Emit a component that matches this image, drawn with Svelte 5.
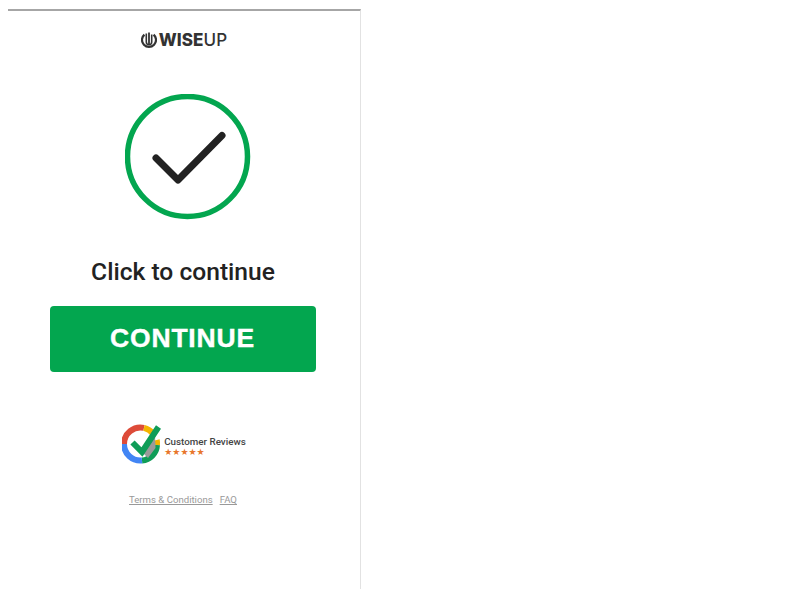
<script>
  const stars = [0, 1, 2, 3, 4]
</script>

<div class="page">
  <div class="panel">
    <div class="logo">
      <svg width="16" height="17" viewBox="0 0 16 17">
        <path d="M3.400 2.600 A7 7 0 1 0 12.600 2.600" fill="none" stroke="#333" stroke-width="2.200" />
        <path d="M5.300 1.500 V10 A2.700 2.700 0 0 0 10.700 10 V2.500" fill="none" stroke="#333" stroke-width="1.600" />
        <path d="M8 0.500 V12" stroke="#333" stroke-width="1.800" />
      </svg>
      <span class="brand"><b>WISE</b><span>UP</span></span>
    </div>

    <svg class="tick" width="126" height="126" viewBox="0 0 126 126">
      <circle cx="62.500" cy="62.500" r="60" fill="#fff" stroke="#03a64f" stroke-width="5.500" />
      <path d="M31 64 L53 86 L97 41.500" fill="none" stroke="#222" stroke-width="7" stroke-linecap="round" stroke-linejoin="round" />
    </svg>

    <h1>Click to continue</h1>
    <button class="continue">CONTINUE</button>

    <div class="reviews">
      <svg width="40" height="40" viewBox="0 0 40 40">
        <path d="M2 20 A16.500 16.500 0 0 1 22 3.900" fill="none" stroke="#dd4b39" stroke-width="6" />
        <path d="M22 3.900 A16.500 16.500 0 0 1 31 9.500" fill="none" stroke="#f4b400" stroke-width="6" />
        <path d="M34.700 16 A16.500 16.500 0 0 1 35 21" fill="none" stroke="#f4b400" stroke-width="6" />
        <path d="M35 21 A16.500 16.500 0 0 1 20 36.500" fill="none" stroke="#0f9d58" stroke-width="6" />
        <path d="M20 36.500 A16.500 16.500 0 0 1 2 20" fill="none" stroke="#4285f4" stroke-width="6" />
        <path d="M20 28 L33 11 L33.500 24 L26 34 Z" fill="#9a9a9a" />
        <path d="M10.500 18.500 L20 28 L36.500 3" fill="none" stroke="#0f9d58" stroke-width="6" />
      </svg>
      <div class="review-text">
        <div class="label">Customer Reviews</div>
        <div class="stars">{#each stars as s}<span>★</span>{/each}</div>
      </div>
    </div>

    <div class="links">
      <a href="#terms">Terms &amp; Conditions</a>
      <a href="#faq">FAQ</a>
    </div>
  </div>
</div>

<style>
  :global(body) {
    background: #fff;
  }
  .page {
    height: 600px;
    padding: 9px 439px 11px 8px;
    box-sizing: border-box;
  }
  .panel {
    height: 100%;
    padding-right: 3px;
    border-top: 2px solid #a6a6a6;
    border-right: 1px solid #e2e2e2;
    box-sizing: border-box;
    display: flex;
    flex-direction: column;
    align-items: center;
    font-family: Roboto, "Liberation Sans", sans-serif;
  }
  .logo {
    display: flex;
    align-items: center;
    gap: 2px;
    margin-top: 20px;
    margin-left: 3px;
    height: 18px;
  }
  .brand {
    font-family: Inter, sans-serif;
    font-size: 17px;
    line-height: 18px;
    letter-spacing: 0.1px;
    color: #333;
  }
  .brand b {
    font-weight: 800;
  }
  .brand span {
    font-weight: 500;
  }
  .tick {
    display: block;
    margin-top: 45px;
    margin-left: 11px;
  }
  h1 {
    margin: 36px 0 0 1px;
    font-size: 24.600px;
    line-height: 32px;
    font-weight: 500;
    color: #222;
  }
  .continue {
    margin: 18px 0 0 0;
    padding: 0 0 2px 0;
    width: 266px;
    height: 66px;
    border: none;
    border-radius: 4px;
    background: #03a64f;
    color: #fff;
    font-family: "Liberation Sans", sans-serif;
    font-weight: 700;
    font-size: 26.500px;
    letter-spacing: 0.8px;
    -webkit-text-stroke: 0.4px #fff;
  }
  .reviews {
    display: flex;
    align-items: center;
    gap: 2px;
    margin-top: 52px;
    margin-left: 3px;
  }
  .review-text {
    display: flex;
    flex-direction: column;
    padding-top: 4px;
  }
  .label {
    font-size: 9.800px;
    line-height: 12px;
    font-weight: 500;
    color: #444;
  }
  .stars {
    display: flex;
    font-family: "DejaVu Sans", sans-serif;
    font-size: 9px;
    line-height: 8px;
    color: #e8762b;
  }
  .links {
    display: flex;
    gap: 7px;
    margin-top: 30px;
    margin-left: 1px;
    font-size: 9.600px;
    line-height: 12px;
  }
  .links a {
    color: #999;
  }
</style>
